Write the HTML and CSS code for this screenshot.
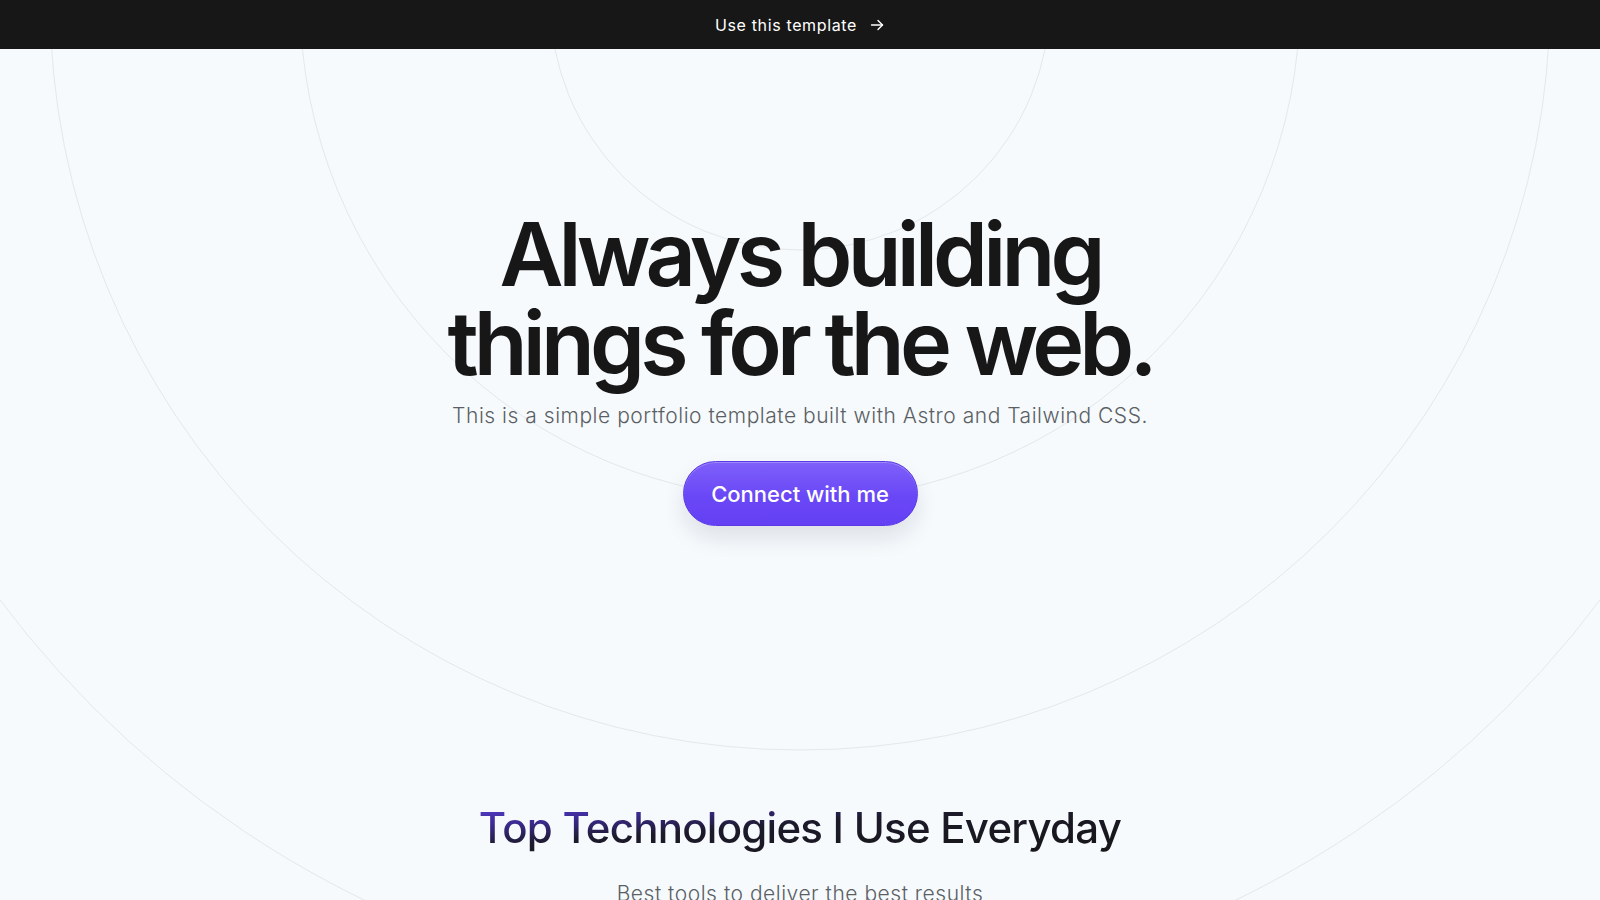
FILE: index.html
```html
<!DOCTYPE html>
<html lang="en">
<head>
<meta charset="utf-8">
<title>Portfolio</title>
<link rel="stylesheet" href="styles.css">
</head>
<body>
<a class="topbar" href="#">
  <span class="topbar-text">Use this template</span>
  <svg class="topbar-arrow" width="16" height="16" viewBox="0 0 16 16" fill="none" stroke="currentColor" stroke-width="1.4" stroke-linecap="round" stroke-linejoin="round"><path d="M2.5 8h11"/><path d="M9 3.5 13.5 8 9 12.5"/></svg>
</a>
<main class="page">
  <svg class="rings" width="1600" height="900" viewBox="0 0 1600 900" aria-hidden="true">
    <g fill="none" stroke="#e3e8ec" stroke-width="1">
      <circle cx="800" cy="-49" r="250"/>
      <circle cx="800" cy="-49" r="500"/>
      <circle cx="800" cy="-49" r="750"/>
      <circle cx="800" cy="-49" r="1000"/>
      <circle cx="800" cy="-49" r="1250"/>
    </g>
  </svg>
  <section class="hero">
    <h1 class="hero-title"><span class="hero-line">Always building</span><span class="hero-line">things for the web.</span></h1>
    <p class="hero-sub">This is a simple portfolio template built with Astro and Tailwind CSS.</p>
    <a class="cta" href="#">Connect with me</a>
  </section>
  <section class="tech">
    <h2 class="tech-title">Top Technologies I Use Everyday</h2>
    <p class="tech-sub">Best tools to deliver the best results</p>
  </section>
</main>
</body>
</html>
```

FILE: styles.css
```css
* { box-sizing: border-box; }
html, body { margin: 0; padding: 0; }
body {
  background: #f6fafd;
  font-family: Inter, "Liberation Sans", sans-serif;
  color: #161616;
  overflow: hidden;
  height: 900px;
}
.topbar {
  display: flex;
  align-items: center;
  justify-content: center;
  gap: 12px;
  height: 49px;
  background: #171717;
  color: #ffffff;
  text-decoration: none;
  position: relative;
  z-index: 2;
}
.topbar-text {
  font-size: 16px;
  letter-spacing: 0.04em;
  font-weight: 400;
}
.topbar-arrow { display: block; margin-top: 1px; }
.page {
  position: relative;
  display: flex;
  flex-direction: column;
  align-items: center;
}
.rings {
  position: absolute;
  left: 0;
  top: 0;
  z-index: 0;
  pointer-events: none;
}
.hero, .tech {
  position: relative;
  z-index: 1;
  display: flex;
  flex-direction: column;
  align-items: center;
  text-align: center;
}
.hero { padding-top: 161px; }
.hero-title {
  margin: 0;
  display: flex;
  flex-direction: column;
  align-items: center;
  font-size: 88px;
  line-height: 89px;
  font-weight: 600;
  letter-spacing: -0.055em;
  color: #171717;
}
.hero-line { display: block; }
.hero-sub {
  margin: 14px 0 0;
  font-size: 21px;
  line-height: 28px;
  font-weight: 300;
  letter-spacing: 0.025em;
  color: #5b5f64;
}
.cta {
  margin-top: 31px;
  display: flex;
  align-items: center;
  justify-content: center;
  width: 235px;
  height: 65px;
  border-radius: 999px;
  background: linear-gradient(180deg, #7e60fa 0%, #6a47f6 55%, #6440f4 100%);
  border: 1px solid #5b3ae6;
  box-shadow: inset 0 1px 0 rgba(255,255,255,0.25), 0 12px 22px rgba(20, 20, 40, 0.10);
  color: #ffffff;
  text-decoration: none;
  font-size: 22px;
  font-weight: 500;
  letter-spacing: 0;
}
.tech { margin-top: 277px; }
.tech-title {
  margin: 0;
  font-size: 42px;
  line-height: 50px;
  font-weight: 500;
  letter-spacing: -0.018em;
  background: linear-gradient(to bottom right, #5a3fd6 0%, #3d2b95 22%, #1c1a2a 45%, #161616 100%);
  -webkit-background-clip: text;
  background-clip: text;
  color: transparent;
}
.tech-sub {
  margin: 27px 0 0;
  font-size: 21px;
  line-height: 28px;
  font-weight: 300;
  letter-spacing: 0.025em;
  color: #5b5f64;
}
```
